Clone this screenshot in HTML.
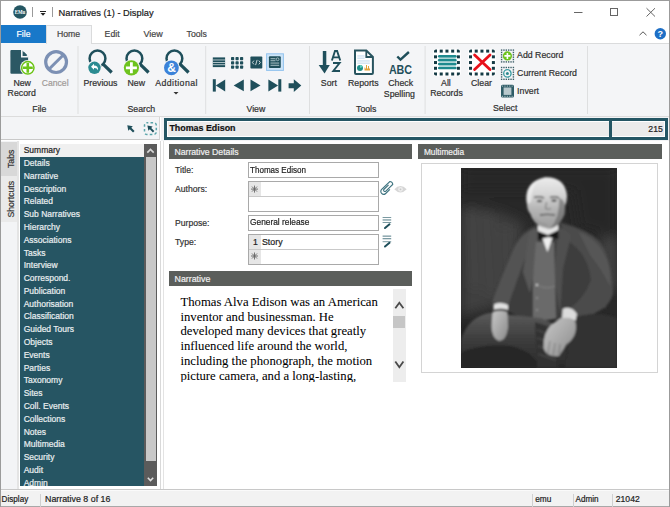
<!DOCTYPE html>
<html><head><meta charset="utf-8"><style>
html,body{margin:0;padding:0;}
body{width:670px;height:507px;position:relative;overflow:hidden;background:#fff;font-family:"Liberation Sans",sans-serif;}
.t{position:absolute;white-space:nowrap;line-height:1;-webkit-text-stroke:0.2px currentColor;}
.r{position:absolute;}
svg.r{overflow:visible}
</style></head><body>
<div class="r" style="left:0px;top:0px;width:670px;height:507px;background:#ffffff;"></div>
<div class="r" style="left:1px;top:43px;width:668px;height:73px;background:#f4f5f7;"></div>
<div class="r" style="left:92px;top:43px;width:577px;height:1px;background:#dadbdc;"></div>
<div class="r" style="left:1px;top:116px;width:668px;height:1px;background:#dcdcdc;"></div>
<svg class="r" style="left:0;top:0" width="670" height="44"><circle cx="20" cy="12" r="6.8" fill="#255763"/><text x="14.8" y="14.3" font-family="Liberation Serif" font-size="6.5" font-weight="bold" fill="#fff" textLength="10.5" lengthAdjust="spacingAndGlyphs">EMu</text><rect x="32" y="7" width="1" height="10" fill="#9a9a9a"/><rect x="40" y="11" width="6" height="1" fill="#222"/><path d="M40.5 13 L45.5 13 L43 15.8 Z" fill="#222"/><rect x="52" y="7" width="1" height="10" fill="#9a9a9a"/><rect x="574" y="12" width="8.5" height="1" fill="#666"/><rect x="610.5" y="8.5" width="7" height="7" fill="none" stroke="#666" stroke-width="1"/><path d="M646.5 8.2 L655 16.5 M655 8.2 L646.5 16.5" stroke="#666" stroke-width="1" fill="none"/><path d="M639.5 35.2 L643 31.8 L646.5 35.2" stroke="#555" stroke-width="1" fill="none"/><circle cx="660.3" cy="33.8" r="5.7" fill="#1d6fc6"/><text x="660.3" y="37.2" font-family="Liberation Sans" font-size="9" font-weight="bold" fill="#fff" text-anchor="middle">?</text></svg>
<div class="t" style="left:58.50px;top:8.53px;font-size:9.3px;color:#1a1a1a;font-weight:normal;font-family:'Liberation Sans',sans-serif;">Narratives (1) - Display</div>
<div class="r" style="left:1px;top:25px;width:45px;height:18px;background:#1878c9;"></div>
<div class="t" style="left:16.60px;top:30.12px;font-size:8.6px;color:#ffffff;font-weight:normal;font-family:'Liberation Sans',sans-serif;">File</div>
<div class="r" style="left:46px;top:25px;width:46px;height:19px;background:#f4f5f7;border:1px solid #dadbdc;border-bottom:none;box-sizing:border-box;"></div>
<div class="t" style="left:56.90px;top:30.14px;font-size:8.7px;color:#444;font-weight:normal;font-family:'Liberation Sans',sans-serif;">Home</div>
<div class="t" style="left:104.60px;top:30.14px;font-size:8.7px;color:#444;font-weight:normal;font-family:'Liberation Sans',sans-serif;">Edit</div>
<div class="t" style="left:143.40px;top:29.88px;font-size:9.0px;color:#444;font-weight:normal;font-family:'Liberation Sans',sans-serif;">View</div>
<div class="t" style="left:186.60px;top:30.14px;font-size:8.7px;color:#444;font-weight:normal;font-family:'Liberation Sans',sans-serif;">Tools</div>
<svg class="r" style="left:0;top:0" width="670" height="120"><path d="M11.4 50.1 H21.8 L28.1 56.7 V72.8 Q28.1 73.8 27.1 73.8 H11.4 Q10.4 73.8 10.4 72.8 V51.1 Q10.4 50.1 11.4 50.1 Z" fill="#2b5864"/><path d="M21.8 50.1 L21.8 56.7 L28.1 56.7" fill="none" stroke="#f4f5f7" stroke-width="1.6"/><path d="M23.6 51.6 L23.6 55 L27.1 55 Z" fill="#2b5864"/><circle cx="27.8" cy="67.8" r="7.7" fill="#f4f5f7"/><circle cx="27.8" cy="67.8" r="6.2" fill="#fff" stroke="#6cc417" stroke-width="1.5"/><path d="M22.8 67.8 H32.8 M27.8 62.8 V72.8" stroke="#6cc417" stroke-width="2.6"/><circle cx="56.1" cy="62.1" r="10.4" fill="none" stroke="#7c90b4" stroke-width="3.2"/><path d="M63.5 54.7 L48.7 69.5" stroke="#7c90b4" stroke-width="3"/><circle cx="97.5" cy="58.5" r="7.9" fill="none" stroke="#1f4f5b" stroke-width="2.5"/><path d="M103.1 64.1 L111.7 72.5" stroke="#1f4f5b" stroke-width="3.2"/><circle cx="94.5" cy="67.8" r="7.4" fill="#f4f5f7"/><circle cx="94.5" cy="67.8" r="6.2" fill="#2b8b91"/><path d="M91.0 66.8 L94.0 63.8 L94.0 65.5 Q98.5 65.5 98.0 70.3 Q97.0 67.8 94.0 68.0 L94.0 69.8 Z" fill="#fff"/><circle cx="134.4" cy="58.5" r="7.9" fill="none" stroke="#1f4f5b" stroke-width="2.5"/><path d="M140.0 64.1 L148.6 72.5" stroke="#1f4f5b" stroke-width="3.2"/><circle cx="131.4" cy="67.8" r="8.6" fill="#f4f5f7"/><circle cx="131.4" cy="67.8" r="7.6" fill="#6ec31e"/><path d="M125.9 67.8 H136.9 M131.4 62.3 V73.3" stroke="#fff" stroke-width="2.8"/><circle cx="174.4" cy="58.5" r="7.9" fill="none" stroke="#1f4f5b" stroke-width="2.5"/><path d="M180.0 64.1 L188.6 72.5" stroke="#1f4f5b" stroke-width="3.2"/><circle cx="171.4" cy="67.8" r="8.4" fill="#f4f5f7"/><circle cx="171.4" cy="67.8" r="7.4" fill="#3b82d9"/><text x="171.6" y="72.1" font-family="Liberation Sans" font-weight="bold" font-size="12" fill="#fff" text-anchor="middle">&amp;</text><path d="M173.5 92 L178.5 92 L176 94.5 Z" fill="#333"/><rect x="212.8" y="57.4" width="12.3" height="9.7" fill="#1f4f5b"/><rect x="212.8" y="59.6" width="12.3" height="0.75" fill="#dfe6e8"/><rect x="212.8" y="62.0" width="12.3" height="0.75" fill="#dfe6e8"/><rect x="212.8" y="64.4" width="12.3" height="0.75" fill="#dfe6e8"/><rect x="231.0" y="57.0" width="3.2" height="3.2" rx="0.7" fill="#1f4f5b"/><rect x="231.0" y="61.3" width="3.2" height="3.2" rx="0.7" fill="#1f4f5b"/><rect x="231.0" y="65.6" width="3.2" height="3.2" rx="0.7" fill="#1f4f5b"/><rect x="235.5" y="57.0" width="3.2" height="3.2" rx="0.7" fill="#1f4f5b"/><rect x="235.5" y="61.3" width="3.2" height="3.2" rx="0.7" fill="#1f4f5b"/><rect x="235.5" y="65.6" width="3.2" height="3.2" rx="0.7" fill="#1f4f5b"/><rect x="240.0" y="57.0" width="3.2" height="3.2" rx="0.7" fill="#1f4f5b"/><rect x="240.0" y="61.3" width="3.2" height="3.2" rx="0.7" fill="#1f4f5b"/><rect x="240.0" y="65.6" width="3.2" height="3.2" rx="0.7" fill="#1f4f5b"/><rect x="250.4" y="56.6" width="11.9" height="11.9" rx="0.8" fill="#1f4f5b"/><path d="M253.9 60.6 L252.4 62.5 L253.9 64.4 M258.8 60.6 L260.3 62.5 L258.8 64.4 M257.1 59.9 L255.6 65.1" fill="none" stroke="#fff" stroke-width="0.75"/><rect x="266.6" y="53.8" width="16.8" height="16.6" fill="#cde4f7" stroke="#92c3ee" stroke-width="1"/><rect x="268.9" y="56.2" width="11.9" height="11.9" rx="1" fill="#1f4f5b"/><rect x="270.5" y="58.3" width="5" height="0.9" fill="#b9cdd2"/><rect x="270.5" y="60.3" width="5" height="0.9" fill="#b9cdd2"/><circle cx="277.6" cy="59.3" r="1.4" fill="none" stroke="#b9cdd2" stroke-width="0.8"/><rect x="270.5" y="62.6" width="8.7" height="0.9" fill="#b9cdd2"/><rect x="270.5" y="64.8" width="8.7" height="0.9" fill="#b9cdd2"/><rect x="212.8" y="79.2" width="3" height="12.4" fill="#1f4f5b"/><path d="M215.8 85.4 L225.2 79.4 V91.4 Z" fill="#1f4f5b"/><path d="M233.7 85.4 L243.8 79.5 V91.3 Z" fill="#1f4f5b"/><path d="M260.5 85.4 L250.5 79.5 V91.3 Z" fill="#1f4f5b"/><path d="M278.1 85.4 L268.4 79.4 V91.4 Z" fill="#1f4f5b"/><rect x="278.3" y="79.2" width="3" height="12.4" fill="#1f4f5b"/><path d="M288.6 83.3 H293.8 V79.2 L301.3 85.6 L293.8 91.9 V88.2 H288.6 Z" fill="#1f4f5b"/><rect x="322.8" y="51" width="3.5" height="15" fill="#1f4f5b"/><path d="M318.7 64.9 H329.8 L324.55 73.5 Z" fill="#1f4f5b"/><path d="M331.9 60.5 L335 51 H337.1 L340.2 60.5 M333.2 57.4 H338.9" fill="none" stroke="#1f4f5b" stroke-width="1.9"/><path d="M333 63 H339.6 L333.3 71 H340" fill="none" stroke="#1f4f5b" stroke-width="1.9"/><path d="M355 50.5 H366.3 L372.9 57 V73 Q372.9 74 371.9 74 H356 Q355 74 355 73 Z" fill="#fff" stroke="#28545f" stroke-width="2"/><path d="M366.3 50.5 V57 H372.9" fill="none" stroke="#28545f" stroke-width="1.8"/><rect x="357.3" y="55.4" width="7.3" height="1.1" fill="#c5ddf0"/><rect x="357.3" y="57.6" width="7.3" height="1.1" fill="#c5ddf0"/><rect x="357.3" y="60.4" width="12.5" height="1.1" fill="#c5ddf0"/><rect x="357.3" y="62.6" width="12.5" height="1.1" fill="#c5ddf0"/><circle cx="360" cy="68" r="3" fill="#1f8f8a"/><path d="M360 68 V65 A3 3 0 0 1 362.8 67 Z" fill="#5fd0c0"/><path d="M364.5 70.4 H370 V68.5 H369 V66 H368 V68.5 H367 V65 H366 V68.5 H365.2 V67.5 H364.5 Z" fill="#e3a33a"/><path d="M397.3 56.5 L400.5 59.7 L408.9 52" fill="none" stroke="#1f4f5b" stroke-width="2.4"/><text x="388.9" y="73.5" font-family="Liberation Sans" font-weight="bold" font-size="12.3" fill="#1f4f5b" textLength="23.2" lengthAdjust="spacingAndGlyphs">ABC</text><rect x="433.20" y="48.80" width="27.50" height="27.50" rx="3" fill="#fff"/><path d="M434.00 52.60 V51.40 Q434.00 49.60 435.80 49.60 H437.00 V52.60 Z" fill="#143a44" transform="rotate(0 435.50 51.10)"/><rect x="434.00" y="55.33" width="3.0" height="3.0" fill="#143a44"/><rect x="434.00" y="61.05" width="3.0" height="3.0" fill="#143a44"/><rect x="434.00" y="66.78" width="3.0" height="3.0" fill="#143a44"/><path d="M434.00 75.50 V74.30 Q434.00 72.50 435.80 72.50 H437.00 V75.50 Z" fill="#143a44" transform="rotate(270 435.50 74.00)"/><rect x="439.73" y="49.60" width="3.0" height="3.0" fill="#143a44"/><rect x="439.73" y="72.50" width="3.0" height="3.0" fill="#143a44"/><rect x="445.45" y="49.60" width="3.0" height="3.0" fill="#143a44"/><rect x="445.45" y="72.50" width="3.0" height="3.0" fill="#143a44"/><rect x="451.18" y="49.60" width="3.0" height="3.0" fill="#143a44"/><rect x="451.18" y="72.50" width="3.0" height="3.0" fill="#143a44"/><path d="M456.90 52.60 V51.40 Q456.90 49.60 458.70 49.60 H459.90 V52.60 Z" fill="#143a44" transform="rotate(90 458.40 51.10)"/><rect x="456.90" y="55.33" width="3.0" height="3.0" fill="#143a44"/><rect x="456.90" y="61.05" width="3.0" height="3.0" fill="#143a44"/><rect x="456.90" y="66.78" width="3.0" height="3.0" fill="#143a44"/><path d="M456.90 75.50 V74.30 Q456.90 72.50 458.70 72.50 H459.90 V75.50 Z" fill="#143a44" transform="rotate(180 458.40 74.00)"/><path d="M439.3 56.3 H455.3" stroke="#1e8a8e" stroke-width="2.7" stroke-linecap="round"/><path d="M439.3 60.2 H455.3" stroke="#1e8a8e" stroke-width="2.7" stroke-linecap="round"/><path d="M439.3 64.1 H455.3" stroke="#1e8a8e" stroke-width="2.7" stroke-linecap="round"/><path d="M439.3 68.0 H455.3" stroke="#1e8a8e" stroke-width="2.7" stroke-linecap="round"/><path d="M439 58.25 H455.5" stroke="#a9d3d4" stroke-width="1.1"/><path d="M439 62.15 H455.5" stroke="#a9d3d4" stroke-width="1.1"/><path d="M439 66.05 H455.5" stroke="#a9d3d4" stroke-width="1.1"/><rect x="468.20" y="48.80" width="27.50" height="27.50" rx="3" fill="#fff"/><path d="M469.00 52.60 V51.40 Q469.00 49.60 470.80 49.60 H472.00 V52.60 Z" fill="#143a44" transform="rotate(0 470.50 51.10)"/><rect x="469.00" y="55.33" width="3.0" height="3.0" fill="#143a44"/><rect x="469.00" y="61.05" width="3.0" height="3.0" fill="#143a44"/><rect x="469.00" y="66.78" width="3.0" height="3.0" fill="#143a44"/><path d="M469.00 75.50 V74.30 Q469.00 72.50 470.80 72.50 H472.00 V75.50 Z" fill="#143a44" transform="rotate(270 470.50 74.00)"/><rect x="474.73" y="49.60" width="3.0" height="3.0" fill="#143a44"/><rect x="474.73" y="72.50" width="3.0" height="3.0" fill="#143a44"/><rect x="480.45" y="49.60" width="3.0" height="3.0" fill="#143a44"/><rect x="480.45" y="72.50" width="3.0" height="3.0" fill="#143a44"/><rect x="486.18" y="49.60" width="3.0" height="3.0" fill="#143a44"/><rect x="486.18" y="72.50" width="3.0" height="3.0" fill="#143a44"/><path d="M491.90 52.60 V51.40 Q491.90 49.60 493.70 49.60 H494.90 V52.60 Z" fill="#143a44" transform="rotate(90 493.40 51.10)"/><rect x="491.90" y="55.33" width="3.0" height="3.0" fill="#143a44"/><rect x="491.90" y="61.05" width="3.0" height="3.0" fill="#143a44"/><rect x="491.90" y="66.78" width="3.0" height="3.0" fill="#143a44"/><path d="M491.90 75.50 V74.30 Q491.90 72.50 493.70 72.50 H494.90 V75.50 Z" fill="#143a44" transform="rotate(180 493.40 74.00)"/><path d="M474.6 54.9 L490 69.6 M490 54.9 L474.6 69.6" stroke="#e8101a" stroke-width="2.8" stroke-linecap="round"/><rect x="500.90" y="49.40" width="1.4" height="1.4" fill="#3d5f68"/><rect x="500.90" y="51.76" width="1.4" height="1.4" fill="#3d5f68"/><rect x="500.90" y="54.12" width="1.4" height="1.4" fill="#3d5f68"/><rect x="500.90" y="56.48" width="1.4" height="1.4" fill="#3d5f68"/><rect x="500.90" y="58.84" width="1.4" height="1.4" fill="#3d5f68"/><rect x="500.90" y="61.20" width="1.4" height="1.4" fill="#3d5f68"/><rect x="503.26" y="49.40" width="1.4" height="1.4" fill="#3d5f68"/><rect x="503.26" y="61.20" width="1.4" height="1.4" fill="#3d5f68"/><rect x="505.62" y="49.40" width="1.4" height="1.4" fill="#3d5f68"/><rect x="505.62" y="61.20" width="1.4" height="1.4" fill="#3d5f68"/><rect x="507.98" y="49.40" width="1.4" height="1.4" fill="#3d5f68"/><rect x="507.98" y="61.20" width="1.4" height="1.4" fill="#3d5f68"/><rect x="510.34" y="49.40" width="1.4" height="1.4" fill="#3d5f68"/><rect x="510.34" y="61.20" width="1.4" height="1.4" fill="#3d5f68"/><rect x="512.70" y="49.40" width="1.4" height="1.4" fill="#3d5f68"/><rect x="512.70" y="51.76" width="1.4" height="1.4" fill="#3d5f68"/><rect x="512.70" y="54.12" width="1.4" height="1.4" fill="#3d5f68"/><rect x="512.70" y="56.48" width="1.4" height="1.4" fill="#3d5f68"/><rect x="512.70" y="58.84" width="1.4" height="1.4" fill="#3d5f68"/><rect x="512.70" y="61.20" width="1.4" height="1.4" fill="#3d5f68"/><circle cx="507.4" cy="55.9" r="4.6" fill="#6ec31e"/><path d="M504.4 55.9 H510.4 M507.4 52.9 V58.9" stroke="#fff" stroke-width="1.6"/><rect x="500.90" y="66.80" width="1.4" height="1.4" fill="#3d5f68"/><rect x="500.90" y="69.16" width="1.4" height="1.4" fill="#3d5f68"/><rect x="500.90" y="71.52" width="1.4" height="1.4" fill="#3d5f68"/><rect x="500.90" y="73.88" width="1.4" height="1.4" fill="#3d5f68"/><rect x="500.90" y="76.24" width="1.4" height="1.4" fill="#3d5f68"/><rect x="500.90" y="78.60" width="1.4" height="1.4" fill="#3d5f68"/><rect x="503.26" y="66.80" width="1.4" height="1.4" fill="#3d5f68"/><rect x="503.26" y="78.60" width="1.4" height="1.4" fill="#3d5f68"/><rect x="505.62" y="66.80" width="1.4" height="1.4" fill="#3d5f68"/><rect x="505.62" y="78.60" width="1.4" height="1.4" fill="#3d5f68"/><rect x="507.98" y="66.80" width="1.4" height="1.4" fill="#3d5f68"/><rect x="507.98" y="78.60" width="1.4" height="1.4" fill="#3d5f68"/><rect x="510.34" y="66.80" width="1.4" height="1.4" fill="#3d5f68"/><rect x="510.34" y="78.60" width="1.4" height="1.4" fill="#3d5f68"/><rect x="512.70" y="66.80" width="1.4" height="1.4" fill="#3d5f68"/><rect x="512.70" y="69.16" width="1.4" height="1.4" fill="#3d5f68"/><rect x="512.70" y="71.52" width="1.4" height="1.4" fill="#3d5f68"/><rect x="512.70" y="73.88" width="1.4" height="1.4" fill="#3d5f68"/><rect x="512.70" y="76.24" width="1.4" height="1.4" fill="#3d5f68"/><rect x="512.70" y="78.60" width="1.4" height="1.4" fill="#3d5f68"/><circle cx="507.4" cy="73.4" r="3.7" fill="none" stroke="#3a9ba0" stroke-width="1.3"/><circle cx="507.4" cy="73.4" r="1.5" fill="#2d8a90"/><rect x="501" y="84.8" width="13" height="12.8" rx="1.5" fill="#2e5c66"/><rect x="503.6" y="87.5" width="7.8" height="7.4" fill="#b8c8cc"/><rect x="502.0" y="85.6" width="1.1" height="1" fill="#b8c8cc"/><rect x="502.0" y="95.8" width="1.1" height="1" fill="#b8c8cc"/><rect x="504.4" y="85.6" width="1.1" height="1" fill="#b8c8cc"/><rect x="504.4" y="95.8" width="1.1" height="1" fill="#b8c8cc"/><rect x="506.8" y="85.6" width="1.1" height="1" fill="#b8c8cc"/><rect x="506.8" y="95.8" width="1.1" height="1" fill="#b8c8cc"/><rect x="509.2" y="85.6" width="1.1" height="1" fill="#b8c8cc"/><rect x="509.2" y="95.8" width="1.1" height="1" fill="#b8c8cc"/><rect x="511.6" y="85.6" width="1.1" height="1" fill="#b8c8cc"/><rect x="511.6" y="95.8" width="1.1" height="1" fill="#b8c8cc"/><rect x="77.5" y="46" width="1" height="68" fill="#dedfe0"/><rect x="205.2" y="46" width="1" height="68" fill="#dedfe0"/><rect x="309.0" y="46" width="1" height="68" fill="#dedfe0"/><rect x="424.6" y="46" width="1" height="68" fill="#dedfe0"/><rect x="587.0" y="46" width="1" height="68" fill="#dedfe0"/></svg>
<div class="t" style="left:13.40px;top:78.79px;font-size:8.75px;color:#303030;font-weight:normal;font-family:'Liberation Sans',sans-serif;">New</div>
<div class="t" style="left:7.60px;top:88.99px;font-size:8.75px;color:#303030;font-weight:normal;font-family:'Liberation Sans',sans-serif;">Record</div>
<div class="t" style="left:32.30px;top:104.79px;font-size:8.75px;color:#303030;font-weight:normal;font-family:'Liberation Sans',sans-serif;">File</div>
<div class="t" style="left:83.40px;top:78.89px;font-size:8.75px;color:#303030;font-weight:normal;font-family:'Liberation Sans',sans-serif;">Previous</div>
<div class="t" style="left:127.50px;top:78.89px;font-size:8.75px;color:#303030;font-weight:normal;font-family:'Liberation Sans',sans-serif;">New</div>
<div class="t" style="left:127.50px;top:105.49px;font-size:8.75px;color:#303030;font-weight:normal;font-family:'Liberation Sans',sans-serif;">Search</div>
<div class="t" style="left:246.50px;top:105.19px;font-size:8.75px;color:#303030;font-weight:normal;font-family:'Liberation Sans',sans-serif;">View</div>
<div class="t" style="left:320.80px;top:78.99px;font-size:8.75px;color:#303030;font-weight:normal;font-family:'Liberation Sans',sans-serif;">Sort</div>
<div class="t" style="left:348.00px;top:78.99px;font-size:8.75px;color:#303030;font-weight:normal;font-family:'Liberation Sans',sans-serif;">Reports</div>
<div class="t" style="left:388.30px;top:78.99px;font-size:8.75px;color:#303030;font-weight:normal;font-family:'Liberation Sans',sans-serif;">Check</div>
<div class="t" style="left:383.80px;top:89.79px;font-size:8.75px;color:#303030;font-weight:normal;font-family:'Liberation Sans',sans-serif;">Spelling</div>
<div class="t" style="left:356.00px;top:104.89px;font-size:8.75px;color:#303030;font-weight:normal;font-family:'Liberation Sans',sans-serif;">Tools</div>
<div class="t" style="left:441.10px;top:79.39px;font-size:8.75px;color:#303030;font-weight:normal;font-family:'Liberation Sans',sans-serif;">All</div>
<div class="t" style="left:430.20px;top:89.29px;font-size:8.75px;color:#303030;font-weight:normal;font-family:'Liberation Sans',sans-serif;">Records</div>
<div class="t" style="left:471.00px;top:79.39px;font-size:8.75px;color:#303030;font-weight:normal;font-family:'Liberation Sans',sans-serif;">Clear</div>
<div class="t" style="left:493.00px;top:104.29px;font-size:8.75px;color:#303030;font-weight:normal;font-family:'Liberation Sans',sans-serif;">Select</div>
<div class="t" style="left:517.10px;top:51.49px;font-size:8.75px;color:#303030;font-weight:normal;font-family:'Liberation Sans',sans-serif;">Add Record</div>
<div class="t" style="left:517.10px;top:69.09px;font-size:8.75px;color:#303030;font-weight:normal;font-family:'Liberation Sans',sans-serif;">Current Record</div>
<div class="t" style="left:517.10px;top:86.59px;font-size:8.75px;color:#303030;font-weight:normal;font-family:'Liberation Sans',sans-serif;">Invert</div>
<div class="t" style="left:41.80px;top:78.92px;font-size:8.6px;color:#a09a98;font-weight:normal;font-family:'Liberation Sans',sans-serif;">Cancel</div>
<div class="t" style="left:155.20px;top:78.99px;font-size:8.75px;color:#303030;font-weight:normal;font-family:'Liberation Sans',sans-serif;letter-spacing:0.42px;">Additional</div>
<div class="r" style="left:1px;top:117px;width:159px;height:23px;background:#f3f4f6;border-bottom:1px solid #c9c9c9;border-right:1px solid #d5d5d5;box-sizing:border-box;"></div>
<svg class="r" style="left:0;top:0" width="170" height="150"><path d="M0 0 L3.2 4.6 L1.1 4.6 L1.1 9.2 L-1.1 9.2 L-1.1 4.6 L-3.2 4.6 Z" fill="#1f4f5b" transform="translate(127.3,125.3) rotate(-45)"/><rect x="144.5" y="122.7" width="11.8" height="11.8" rx="2.5" fill="none" stroke="#5aa5aa" stroke-width="1.5" stroke-dasharray="2.6 2.2" stroke-dashoffset="1.3"/><path d="M0 0 L3 4.4 L1 4.4 L1 8.8 L-1 8.8 L-1 4.4 L-3 4.4 Z" fill="#1f4f5b" transform="translate(147.4,125.5) rotate(-45)"/></svg>
<div class="r" style="left:161px;top:117px;width:508px;height:24px;background:#f3f4f6;"></div>
<div class="r" style="left:164px;top:118px;width:504px;height:22px;background:#ebebeb;border:3px solid #245664;box-shadow:inset 0 0 0 1px #fff;box-sizing:border-box;"></div>
<div class="r" style="left:609px;top:118px;width:3px;height:22px;background:#245664;"></div>
<div class="t" style="left:169.40px;top:123.97px;font-size:8.9px;color:#111;font-weight:bold;font-family:'Liberation Sans',sans-serif;">Thomas Edison</div>
<div class="t" style="left:648.30px;top:124.64px;font-size:8.7px;color:#222;font-weight:normal;font-family:'Liberation Sans',sans-serif;">215</div>
<div class="r" style="left:1px;top:141px;width:16px;height:348px;background:#f3f4f6;"></div>
<div class="r" style="left:1px;top:142px;width:16px;height:34px;background:#d8d8d8;"></div>
<div class="r" style="left:1px;top:176px;width:16px;height:46px;background:#eaeaea;"></div>
<div class="r" style="left:17px;top:141px;width:1.5px;height:348px;background:#e4e4e4;"></div>
<div class="t" style="left:0;top:0;font-size:8.7px;color:#333;transform-origin:0 0;transform:translate(7.2px,168px) rotate(-90deg);">Tabs</div>
<div class="t" style="left:0;top:0;font-size:8.7px;color:#333;transform-origin:0 0;transform:translate(7.2px,217.6px) rotate(-90deg);">Shortcuts</div>
<div class="r" style="left:20px;top:144px;width:124px;height:12.5px;background:#f0f0f0;"></div>
<div class="r" style="left:20px;top:156.5px;width:124px;height:329px;background:#265563;"></div>
<div class="r" style="left:0;top:144px;width:144px;height:341.5px;overflow:hidden"><div class="t" style="left:23.70px;top:2.20px;font-size:8.5px;color:#222;font-weight:normal;font-family:'Liberation Sans',sans-serif;">Summary</div>
<div class="t" style="left:23.70px;top:14.99px;font-size:8.5px;color:#e9eef0;font-weight:normal;font-family:'Liberation Sans',sans-serif;">Details</div>
<div class="t" style="left:23.70px;top:27.78px;font-size:8.5px;color:#e9eef0;font-weight:normal;font-family:'Liberation Sans',sans-serif;">Narrative</div>
<div class="t" style="left:23.70px;top:40.57px;font-size:8.5px;color:#e9eef0;font-weight:normal;font-family:'Liberation Sans',sans-serif;">Description</div>
<div class="t" style="left:23.70px;top:53.36px;font-size:8.5px;color:#e9eef0;font-weight:normal;font-family:'Liberation Sans',sans-serif;">Related</div>
<div class="t" style="left:23.70px;top:66.15px;font-size:8.5px;color:#e9eef0;font-weight:normal;font-family:'Liberation Sans',sans-serif;">Sub Narratives</div>
<div class="t" style="left:23.70px;top:78.94px;font-size:8.5px;color:#e9eef0;font-weight:normal;font-family:'Liberation Sans',sans-serif;">Hierarchy</div>
<div class="t" style="left:23.70px;top:91.73px;font-size:8.5px;color:#e9eef0;font-weight:normal;font-family:'Liberation Sans',sans-serif;">Associations</div>
<div class="t" style="left:23.70px;top:104.52px;font-size:8.5px;color:#e9eef0;font-weight:normal;font-family:'Liberation Sans',sans-serif;">Tasks</div>
<div class="t" style="left:23.70px;top:117.31px;font-size:8.5px;color:#e9eef0;font-weight:normal;font-family:'Liberation Sans',sans-serif;">Interview</div>
<div class="t" style="left:23.70px;top:130.10px;font-size:8.5px;color:#e9eef0;font-weight:normal;font-family:'Liberation Sans',sans-serif;">Correspond.</div>
<div class="t" style="left:23.70px;top:142.89px;font-size:8.5px;color:#e9eef0;font-weight:normal;font-family:'Liberation Sans',sans-serif;">Publication</div>
<div class="t" style="left:23.70px;top:155.68px;font-size:8.5px;color:#e9eef0;font-weight:normal;font-family:'Liberation Sans',sans-serif;">Authorisation</div>
<div class="t" style="left:23.70px;top:168.47px;font-size:8.5px;color:#e9eef0;font-weight:normal;font-family:'Liberation Sans',sans-serif;">Classification</div>
<div class="t" style="left:23.70px;top:181.26px;font-size:8.5px;color:#e9eef0;font-weight:normal;font-family:'Liberation Sans',sans-serif;">Guided Tours</div>
<div class="t" style="left:23.70px;top:194.05px;font-size:8.5px;color:#e9eef0;font-weight:normal;font-family:'Liberation Sans',sans-serif;">Objects</div>
<div class="t" style="left:23.70px;top:206.84px;font-size:8.5px;color:#e9eef0;font-weight:normal;font-family:'Liberation Sans',sans-serif;">Events</div>
<div class="t" style="left:23.70px;top:219.63px;font-size:8.5px;color:#e9eef0;font-weight:normal;font-family:'Liberation Sans',sans-serif;">Parties</div>
<div class="t" style="left:23.70px;top:232.42px;font-size:8.5px;color:#e9eef0;font-weight:normal;font-family:'Liberation Sans',sans-serif;">Taxonomy</div>
<div class="t" style="left:23.70px;top:245.21px;font-size:8.5px;color:#e9eef0;font-weight:normal;font-family:'Liberation Sans',sans-serif;">Sites</div>
<div class="t" style="left:23.70px;top:258.00px;font-size:8.5px;color:#e9eef0;font-weight:normal;font-family:'Liberation Sans',sans-serif;">Coll. Events</div>
<div class="t" style="left:23.70px;top:270.79px;font-size:8.5px;color:#e9eef0;font-weight:normal;font-family:'Liberation Sans',sans-serif;">Collections</div>
<div class="t" style="left:23.70px;top:283.58px;font-size:8.5px;color:#e9eef0;font-weight:normal;font-family:'Liberation Sans',sans-serif;">Notes</div>
<div class="t" style="left:23.70px;top:296.37px;font-size:8.5px;color:#e9eef0;font-weight:normal;font-family:'Liberation Sans',sans-serif;">Multimedia</div>
<div class="t" style="left:23.70px;top:309.16px;font-size:8.5px;color:#e9eef0;font-weight:normal;font-family:'Liberation Sans',sans-serif;">Security</div>
<div class="t" style="left:23.70px;top:321.95px;font-size:8.5px;color:#e9eef0;font-weight:normal;font-family:'Liberation Sans',sans-serif;">Audit</div>
<div class="t" style="left:23.70px;top:334.74px;font-size:8.5px;color:#e9eef0;font-weight:normal;font-family:'Liberation Sans',sans-serif;">Admin</div>
</div>
<div class="r" style="left:144px;top:144px;width:13px;height:341.5px;background:#5b5b5b;"></div>
<div class="r" style="left:145.7px;top:157px;width:10.3px;height:303.6px;background:#c8c8c8;"></div>
<svg class="r" style="left:0;top:0" width="170" height="500"><path d="M147.3 152.6 L150.5 149.4 L153.7 152.6" fill="none" stroke="#d8d8d8" stroke-width="1.6"/><path d="M147.8 477.8 L150.5 480.5 L153.2 477.8" fill="none" stroke="#e0e0e0" stroke-width="1.6"/></svg>
<div class="r" style="left:160px;top:141px;width:1px;height:348px;background:#d9d9d9;"></div>
<div class="r" style="left:163px;top:141px;width:1px;height:348px;background:#e3e3e3;"></div>
<div class="r" style="left:169px;top:144px;width:243px;height:15px;background:#5b5e5b;"></div>
<div class="t" style="left:174.40px;top:147.54px;font-size:8.7px;color:#f0f0f0;font-weight:normal;font-family:'Liberation Sans',sans-serif;">Narrative Details</div>
<div class="r" style="left:418px;top:144px;width:244px;height:15px;background:#5b5e5b;"></div>
<div class="t" style="left:423.90px;top:147.87px;font-size:8.3px;color:#f0f0f0;font-weight:normal;font-family:'Liberation Sans',sans-serif;">Multimedia</div>
<div class="t" style="left:175.10px;top:166.42px;font-size:8.6px;color:#333;font-weight:normal;font-family:'Liberation Sans',sans-serif;">Title:</div>
<div class="t" style="left:175.10px;top:185.32px;font-size:8.6px;color:#333;font-weight:normal;font-family:'Liberation Sans',sans-serif;">Authors:</div>
<div class="t" style="left:175.10px;top:218.82px;font-size:8.6px;color:#333;font-weight:normal;font-family:'Liberation Sans',sans-serif;">Purpose:</div>
<div class="t" style="left:175.10px;top:238.22px;font-size:8.6px;color:#333;font-weight:normal;font-family:'Liberation Sans',sans-serif;">Type:</div>
<div class="r" style="left:247.5px;top:161.5px;width:131.5px;height:16.5px;background:#fff;border:1px solid #a9a9a9;box-sizing:border-box;background:#fff;"></div>
<div class="t" style="left:250.30px;top:164.84px;font-size:9.4px;color:#222;font-weight:normal;font-family:'Liberation Sans',sans-serif;transform-origin:0 0;transform:scaleX(0.86);">Thomas Edison</div>
<div class="r" style="left:247.5px;top:181px;width:131.5px;height:31px;background:#fff;border:1px solid #a9a9a9;box-sizing:border-box;background:#fff;"></div>
<div class="r" style="left:248.5px;top:182px;width:12px;height:13.5px;background:#e6e6e6;"></div>
<div class="r" style="left:248.5px;top:196px;width:129px;height:1px;background:#c9c9c9;"></div>
<div class="r" style="left:247.5px;top:214.5px;width:131.5px;height:16px;background:#fff;border:1px solid #a9a9a9;box-sizing:border-box;background:#fff;"></div>
<div class="t" style="left:250.00px;top:218.07px;font-size:8.9px;color:#222;font-weight:normal;font-family:'Liberation Sans',sans-serif;transform-origin:0 0;transform:scaleX(0.94);">General release</div>
<div class="r" style="left:247.5px;top:233.7px;width:131.5px;height:31px;background:#fff;border:1px solid #a9a9a9;box-sizing:border-box;background:#fff;"></div>
<div class="r" style="left:248.5px;top:234.7px;width:12px;height:29px;background:#e6e6e6;"></div>
<div class="r" style="left:248.5px;top:249px;width:129px;height:1px;background:#c9c9c9;"></div>
<div class="t" style="left:253.10px;top:237.94px;font-size:8.7px;color:#222;font-weight:normal;font-family:'Liberation Sans',sans-serif;">1</div>
<div class="t" style="left:262.00px;top:237.85px;font-size:8.8px;color:#222;font-weight:normal;font-family:'Liberation Sans',sans-serif;">Story</div>
<svg class="r" style="left:0;top:0" width="670" height="300"><g stroke="#666" stroke-width="0.9"><path d="M254.5 185.6 V192.6 M251 189.1 H258 M252 186.6 L257 191.6 M257 186.6 L252 191.6"/></g><g stroke="#666" stroke-width="0.9"><path d="M254.5 252.5 V259.5 M251 256 H258 M252 253.5 L257 258.5 M257 253.5 L252 258.5"/></g><path d="M10 -1.2 H4.2 A1.2 1.2 0 0 0 4.2 1.2 H12.9 A2.6 2.6 0 0 0 12.9 -2.6 H2.6 A2.6 2.6 0 0 0 2.6 2.6 H8" fill="none" stroke="#3f7480" stroke-width="1.05" transform="translate(381.6,193.4) rotate(-44) scale(1.1)"/><path d="M394.3 189.3 Q400.5 182.8 406.7 189.3 Q400.5 195.8 394.3 189.3 Z" fill="#d6d6d6"/><circle cx="400.5" cy="189.3" r="2.4" fill="#ececec"/><circle cx="400.5" cy="189.3" r="0.9" fill="#c8c8c8"/><g fill="#7b9aa2"><rect x="382.6" y="217" width="8.6" height="1"/><rect x="382.6" y="219.3" width="8.6" height="1.3"/><rect x="382.6" y="222" width="8.6" height="1"/></g><path d="M385 228 L389.5 224.3" stroke="#1f4f5b" stroke-width="2" stroke-linecap="round"/><g fill="#7b9aa2"><rect x="382.6" y="235.5" width="8.6" height="1.3"/><rect x="382.6" y="238" width="8.6" height="1.3"/><rect x="382.6" y="241.2" width="8.6" height="1"/></g><path d="M385 246.5 L389.5 242.8" stroke="#1f4f5b" stroke-width="2" stroke-linecap="round"/></svg>
<div class="r" style="left:169px;top:271px;width:243px;height:15px;background:#5b5e5b;"></div>
<div class="t" style="left:174.50px;top:274.61px;font-size:8.85px;color:#f0f0f0;font-weight:normal;font-family:'Liberation Sans',sans-serif;">Narrative</div>
<div class="r" style="left:0;top:289px;width:392px;height:93px;overflow:hidden"><div class="t" style="left:180.4px;top:5.95px;font-size:12.73px;line-height:14.72px;color:#000;font-family:'Liberation Serif',serif;-webkit-text-stroke:0.05px #000;">Thomas Alva Edison was an American<br>inventor and businessman. He<br>developed many devices that greatly<br>influenced life around the world,<br>including the phonograph, the motion<br>picture camera, and a long-lasting,</div></div>
<div class="r" style="left:393px;top:289px;width:13px;height:92.5px;background:#ededed;"></div>
<div class="r" style="left:393.3px;top:316.2px;width:11.6px;height:11.8px;background:#c6c6c6;"></div>
<svg class="r" style="left:0;top:0" width="670" height="400"><path d="M395.3 308.3 L399.35 302.8 L403.4 308.3" fill="none" stroke="#4a4a4a" stroke-width="1.8"/><path d="M395.3 361.5 L399.35 367.2 L403.4 361.5" fill="none" stroke="#4a4a4a" stroke-width="1.8"/></svg>
<div class="r" style="left:420.5px;top:163px;width:237.5px;height:209.5px;background:#fff;border:1px solid #d4d4d4;box-sizing:border-box;"></div>
<svg class="r" style="left:461px;top:168px;overflow:hidden" width="156" height="200" viewBox="0 0 156 200"><defs><filter id="bl" x="-10%" y="-10%" width="120%" height="120%"><feGaussianBlur stdDeviation="0.8"/></filter><filter id="bl2" x="-30%" y="-30%" width="160%" height="160%"><feGaussianBlur stdDeviation="6"/></filter><radialGradient id="face" cx="0.38" cy="0.42" r="0.62"><stop offset="0" stop-color="#c6c6c6"/><stop offset="0.55" stop-color="#a6a6a6"/><stop offset="1" stop-color="#6a6a6a"/></radialGradient><radialGradient id="hair" cx="0.42" cy="0.4" r="0.62"><stop offset="0" stop-color="#f2f2f2"/><stop offset="0.8" stop-color="#d0d0d0"/><stop offset="1" stop-color="#a0a0a0"/></radialGradient><linearGradient id="hand" x1="0" y1="0" x2="1" y2="1"><stop offset="0" stop-color="#c8c8c8"/><stop offset="1" stop-color="#8a8a8a"/></linearGradient><linearGradient id="head" x1="0" y1="0" x2="0" y2="1"><stop offset="0" stop-color="#ececec"/><stop offset="0.35" stop-color="#d4d4d4"/><stop offset="0.6" stop-color="#b6b6b6"/><stop offset="1" stop-color="#9a9a9a"/></linearGradient><linearGradient id="leg" x1="0" y1="0" x2="0" y2="1"><stop offset="0" stop-color="#5a5a5a"/><stop offset="0.5" stop-color="#3c3c3c"/><stop offset="1" stop-color="#2a2a2a"/></linearGradient></defs><rect width="156" height="200" fill="#282828"/><g filter="url(#bl2)"><path d="M0 40 Q30 38 62 55 L58 130 Q30 140 0 148 Z" fill="#404040"/><path d="M0 0 H156 V22 H0 Z" fill="#252525"/><path d="M112 20 H156 V70 L118 60 Z" fill="#272727"/><path d="M0 150 V200 H14 L18 165 Z" fill="#1e1e1e"/><path d="M140 70 Q152 66 156 72 V125 L142 118 Z" fill="#454545"/></g><path d="M10 40 L14 120 M26 45 L30 125 M44 60 L46 115" stroke="#4c4c4c" stroke-width="3" filter="url(#bl2)"/><g filter="url(#bl)"><path d="M75 57 Q62 62 55 74 Q40 105 32 135 L47 143 L60 150 L100 152 L116 147 L145 140 Q152 125 151 110 Q148 85 140 74 Q128 62 100 54 Z" fill="#3e3e3e"/><path d="M70 62 Q58 68 52 82 Q40 110 31 134 L47 138 Q55 115 62 96 L68 78 Z" fill="#525252"/><path d="M100 56 Q130 62 143 80 Q152 100 152 125 Q150 138 132 146 L115 149 L108 141 Q124 130 130 112 Q128 92 116 80 L104 70 Z" fill="#4c4c4c"/><path d="M118 64 Q138 72 146 92 Q150 104 149 118 Q140 100 130 88 Z" fill="#575757"/><path d="M68 64 Q74 58 78 62 L74 98 L69 125 L62 104 Z" fill="#585858"/><path d="M97 60 Q104 60 110 68 L102 100 L99 146 L93 108 Z" fill="#505050"/><path d="M75 74 L93 74 L95 150 Q84 154 72 150 L72 110 Z" fill="#6a6a6a"/><circle cx="76" cy="117" r="1.2" fill="#d8d8d8"/><circle cx="76" cy="130" r="0.9" fill="#999"/><circle cx="76" cy="142" r="0.9" fill="#999"/><path d="M76 117 Q86 122 94 118" stroke="#888" stroke-width="0.8" fill="none"/><path d="M80.5 68 L92 68 L86.5 84 Z" fill="#eeeeee"/><path d="M76.8 57 Q87 62 97.3 56.5 L97 66 Q87 70 77 66 Z" fill="#e6e6e6"/><path d="M76.8 63 L87 67 L97.3 62 L97.3 71 L87 69 L76.8 72 Z" fill="#141414"/><path d="M0 172 Q6 150 28 145 L80 150 Q98 156 104 170 L106 200 H0 Z" fill="url(#leg)"/><path d="M0 200 V185 Q20 175 50 178 Q70 182 80 200 Z" fill="#262626"/><path d="M74 154 L92 160 L96 200 H76 Z" fill="#333"/><path d="M76 162 L93 168 M76 170 L94 176 M77 178 L94 184 M77 186 L95 192" stroke="#4e4e4e" stroke-width="1.1"/><path d="M110 150 Q138 142 156 150 V200 H104 Z" fill="#303030"/><path d="M32.5 136.5 Q40 133.5 47 137 L47 143.5 Q40 141 32.5 143.5 Z" fill="#e2e2e2"/><path d="M32.5 141.8 Q40 139.5 47 142 L47 144.5 Q40 142 32.5 144.5 Z" fill="#151515"/><path d="M101.6 141 Q110 137 116 146 L114.5 153 Q108 149 101 151 Z" fill="#dcdcdc"/><path d="M31.5 144 Q39.5 141 46.5 144 L47 160 Q45 173 38 173 Q30.6 170 30.6 158 Z" fill="url(#hand)"/><path d="M100 150 Q110 149 114.5 154 Q117 168 106 176 L98 188 Q86 190 82.5 180 Q82 165 90 157 Z" fill="url(#hand)"/><path d="M89 173 L86.5 187 M94 175 L92 188 M99 176 L98 186" stroke="#707070" stroke-width="0.8"/><path d="M66 36 Q62 14 84 9.3 Q104 8.5 106 28 Q106 34 104 38 L103.5 46 Q99 58 88 61 Q73 58 69.5 46 Q66 42 66 36 Z" fill="url(#head)"/><path d="M98 30 Q106 32 104 46 Q100 58 89 61 Q99 50 98 30 Z" fill="#5a5a5a" opacity="0.55"/><path d="M66 36 Q63 18 78 11 Q70 20 70 34 Z" fill="#f0f0f0" opacity="0.7"/><path d="M73 29.5 Q78 27.8 83 30 M89 29.5 Q94 27.8 98 30" stroke="#555" stroke-width="1.6" fill="none"/><ellipse cx="78.5" cy="33" rx="2.8" ry="1.3" fill="#505050"/><ellipse cx="93" cy="32.6" rx="2.8" ry="1.3" fill="#505050"/><path d="M85.5 34 L84.5 40.5 Q87 42 90 40.5" stroke="#7a7a7a" stroke-width="1.1" fill="none"/><path d="M79 47 Q87 45.5 94 47.2" stroke="#4a4a4a" stroke-width="1.3" fill="none"/><path d="M73 50 Q78 56 86 57" stroke="#8a8a8a" stroke-width="1" fill="none"/></g></svg>
<div class="r" style="left:1px;top:489px;width:668px;height:18px;background:#f2f2f2;border-top:1px solid #c8c8c8;border-bottom:1px solid #a8a8a8;box-shadow:inset 0 1px 0 #fafafa;box-sizing:border-box;"></div>
<div class="r" style="left:40.4px;top:494px;width:1px;height:13px;background:#d0d0d0;"></div>
<div class="r" style="left:532.3px;top:494px;width:1px;height:13px;background:#d0d0d0;"></div>
<div class="r" style="left:572.6px;top:494px;width:1px;height:13px;background:#d0d0d0;"></div>
<div class="r" style="left:612.2px;top:494px;width:1px;height:13px;background:#d0d0d0;"></div>
<div class="t" style="left:1.60px;top:495.70px;font-size:8.15px;color:#222;font-weight:normal;font-family:'Liberation Sans',sans-serif;">Display</div>
<div class="t" style="left:45.00px;top:494.51px;font-size:8.85px;color:#222;font-weight:normal;font-family:'Liberation Sans',sans-serif;">Narrative 8 of 16</div>
<div class="t" style="left:535.20px;top:494.97px;font-size:8.3px;color:#222;font-weight:normal;font-family:'Liberation Sans',sans-serif;">emu</div>
<div class="t" style="left:575.50px;top:495.70px;font-size:8.15px;color:#222;font-weight:normal;font-family:'Liberation Sans',sans-serif;">Admin</div>
<div class="t" style="left:615.80px;top:494.72px;font-size:8.6px;color:#222;font-weight:normal;font-family:'Liberation Sans',sans-serif;">21042</div>
<div class="r" style="left:0;top:0;width:670px;height:507px;box-sizing:border-box;border:1px solid #9b9b9b;border-bottom:none"></div>
</body></html>
